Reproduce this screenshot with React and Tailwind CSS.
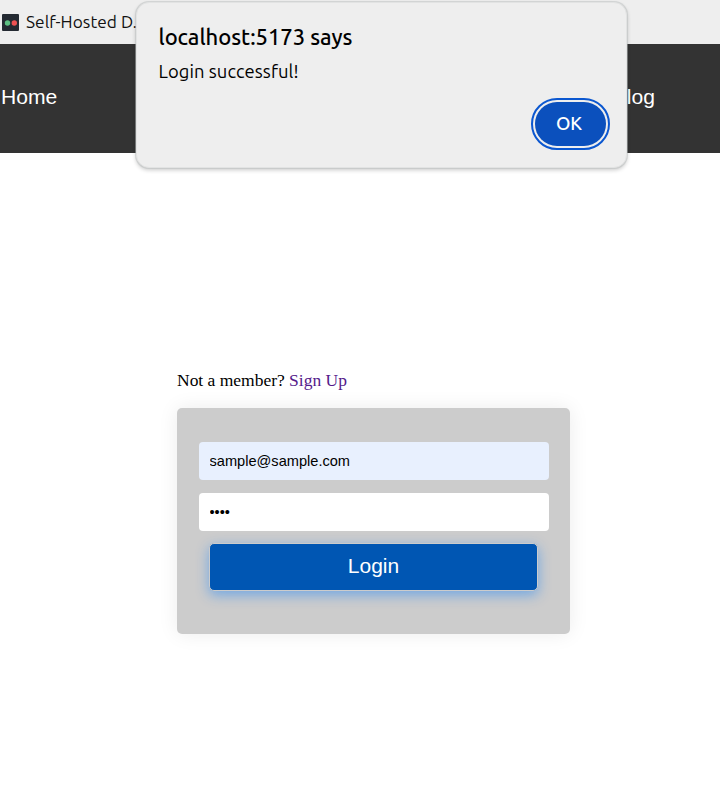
function BookmarksBar() {
  return (
    <div className="flex h-11 items-center bg-[#eeeeee] pl-0.5 font-[Ubuntu,'Noto_Sans',sans-serif] text-[#111]">
      <svg width="17" height="17" viewBox="0 0 17 17" className="mr-[7px] shrink-0">
        <rect width="17" height="17" rx="1" fill="#242a32" />
        <circle cx="5.5" cy="9" r="2.7" fill="#5dc083" />
        <circle cx="12.3" cy="9" r="2.7" fill="#ee5253" />
      </svg>
      <span className="text-[17.3px] leading-[22px] font-[370] tracking-[0.05px] whitespace-nowrap">Self-Hosted D...</span>
    </div>
  );
}

function NavBar() {
  return (
    <nav className="flex h-[109px] items-center justify-between bg-[#333] pr-[65px] pl-[1px] text-[21.1px] leading-6 text-white">
      <a className="-mt-1">Home</a>
      <a className="-mt-1">Blog</a>
    </nav>
  );
}

function AlertDialog() {
  return (
    <div
      role="alertdialog"
      className="absolute top-[2px] left-[136px] flex h-[166px] w-[491px] flex-col rounded-[13px] border border-[#e2e3e3] bg-[#eeeeee] px-[21.5px] pt-[19px] font-[Ubuntu,'Noto_Sans',sans-serif] text-black shadow-[0_0_0_1px_rgba(190,194,194,0.5),0_2px_4px_rgba(0,0,0,0.22)]"
    >
      <h1 className="self-start text-[22px] leading-[30px] font-[460] tracking-[-0.03px] whitespace-nowrap">
        localhost:5173 says
      </h1>
      <p className="mt-[7px] self-start text-[18.4px] leading-[25px] font-[370] tracking-[0.07px] whitespace-nowrap">
        Login successful!
      </p>
      <button className="mt-[14px] mr-[-5.5px] flex h-[52px] w-[79px] items-center justify-center self-end rounded-full border-2 border-[#0b57d0] p-[2px]">
        <span className="flex h-full w-full items-center justify-center rounded-full bg-[#0b50bd] pr-[3px] pb-px text-[18.5px] font-[460] text-white">
          OK
        </span>
      </button>
    </div>
  );
}

function LoginForm() {
  return (
    <main className="mt-[215px] ml-[177px] w-[393px]">
      <p className="font-['Liberation_Serif',serif] text-[17.5px] leading-6 tracking-[-0.01px] text-black">
        Not a member? <a className="text-[#551a8b]">Sign Up</a>
      </p>
      <form className="mt-4 flex h-[226px] flex-col rounded-[5px] bg-[#ccc] px-[22px] pt-[34px] shadow-[0_0_20px_rgba(0,0,0,0.08)]">
        <input
          type="email"
          defaultValue="sample@sample.com"
          className="h-[38px] w-[350px] rounded-[4px] bg-[#e8f0fe] px-[10.5px] text-[14.6px] text-black"
        />
        <input
          type="password"
          defaultValue="pass"
          className="mt-[13px] h-[38px] w-[350px] rounded-[4px] bg-white px-[10.5px] text-[14.6px] text-black"
        />
        <button
          type="button"
          className="mt-3 ml-[10px] h-12 w-[329px] rounded-[5px] border border-[#ccc] bg-[#0056b3] pb-[3px] text-[21px] leading-6 text-white shadow-[0_4px_13px_rgba(0,123,255,0.45)]"
        >
          Login
        </button>
      </form>
    </main>
  );
}

export default function App() {
  return (
    <div className="relative h-[808px] w-[720px] overflow-hidden bg-white font-['Liberation_Sans',sans-serif]">
      <BookmarksBar />
      <NavBar />
      <LoginForm />
      <AlertDialog />
    </div>
  );
}
